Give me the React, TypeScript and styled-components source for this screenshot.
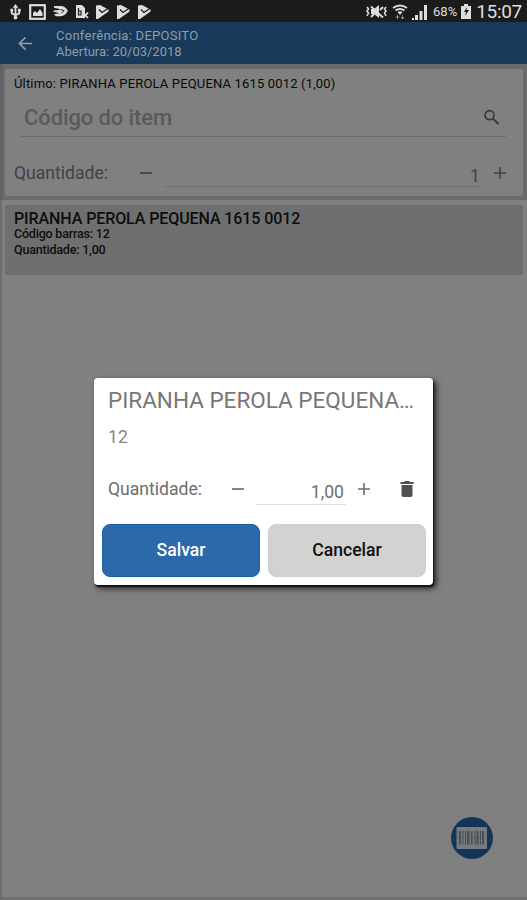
import React from 'react';
import styled, { createGlobalStyle } from 'styled-components';

const GlobalStyle = createGlobalStyle`
  * { box-sizing: border-box; }
  body { margin: 0; background: #7f7f7f; font-family: Roboto, "Liberation Sans", sans-serif; }
  svg { display: block; flex: none; }
`;

const Screen = styled.div`
  position: relative;
  width: 527px;
  height: 900px;
  overflow: hidden;
  display: flex;
  flex-direction: column;
  background: #7f7f7f;
`;

const StatusBar = styled.div`
  height: 22px;
  flex: none;
  display: flex;
  align-items: center;
  justify-content: space-between;
  padding: 1px 5px 0 9px;
  background: #1b1b1b;
  color: #dedede;
`;

const StatusGroup = styled.div<{ $gap: number }>`
  display: flex;
  align-items: center;
  gap: ${p => p.$gap}px;
`;

const Battery = styled.span`
  font-size: 13px;
  line-height: 21px;
  letter-spacing: 0;
  margin-left: 1px;
`;

const Clock = styled.span`
  font-size: 19px;
  line-height: 21px;
  letter-spacing: -0.3px;
  margin-left: 1px;
`;

const Header = styled.header`
  height: 42px;
  flex: none;
  display: flex;
  padding: 6px 0 0 17px;
  gap: 23px;
  background: #183959;
  color: #929da8;
`;

const BackButton = styled.div`
  padding-top: 8px;
`;

const HeaderText = styled.div`
  font-size: 13px;
  line-height: 16px;
`;

const HeaderLine = styled.div<{ $spacing: number }>`
  letter-spacing: ${p => p.$spacing}px;
`;

const CardFrame = styled.section`
  height: 136px;
  flex: none;
  padding: 5px 4px 4px 2px;
  background: #6b6b6b;
  border-left: 3px solid #626262;
`;

const Card = styled.div`
  height: 127px;
  padding: 7px 14px 0 9px;
  background: #808080;
  border-radius: 2px;
`;

const LastItem = styled.div`
  font-size: 13px;
  line-height: 16px;
  letter-spacing: 0.16px;
  color: #080808;
`;

const SearchField = styled.div`
  height: 45px;
  margin: 0 3px 0 7px;
  padding: 13px 6px 0 3px;
  display: flex;
  justify-content: space-between;
  border-bottom: 1px solid #6c6c6c;
`;

const Placeholder = styled.div`
  font-size: 22px;
  font-weight: 500;
  line-height: 26px;
  letter-spacing: -0.1px;
  color: #5a5a5a;
`;

const SearchIcon = styled.div`
  padding-top: 4px;
`;

const QuantityRow = styled.div<{ $modal?: boolean }>`
  display: flex;
  height: ${p => (p.$modal ? 34 : 50)}px;
  padding-top: ${p => (p.$modal ? 6 : 24)}px;
  color: ${p => (p.$modal ? '#6e6e6e' : '#424242')};
`;

const QuantityLabel = styled.div<{ $width: number }>`
  width: ${p => p.$width}px;
  font-size: 17.6px;
  line-height: 25px;
`;

const Step = styled.div<{ $side: 'minus' | 'plus'; $width?: number }>`
  padding-top: 5px;
  width: ${p => p.$width ?? 14}px;
  margin-left: ${p => (p.$side === 'minus' ? 0 : 11)}px;
`;

const QuantityValue = styled.div<{ $width: number; $modal?: boolean }>`
  width: ${p => p.$width}px;
  padding: 3px 2px 0 0;
  text-align: right;
  font-size: 17.6px;
  line-height: 24px;
  height: ${p => (p.$modal ? 28 : 26)}px;
  border-bottom: 1px solid ${p => (p.$modal ? '#dcdcdc' : '#707070')};
`;

const List = styled.main`
  flex: 1;
  padding: 5px 4px 0 3px;
  background: #808080;
  border-left: 2px solid #6c6c6c;
  border-bottom: 3px solid #6f6f6f;
`;

const ListItem = styled.div`
  height: 70px;
  padding: 6px 9px;
  color: #0d0d0d;
  background: #6f6f6f;
`;

const ItemTitle = styled.div`
  font-size: 16px;
  line-height: 15px;
  font-weight: 500;
  letter-spacing: -0.09px;
`;

const ItemLine = styled.div`
  font-size: 12.5px;
  line-height: 16px;
  font-weight: 500;
  letter-spacing: -0.2px;
`;

const ScanButton = styled.div`
  position: absolute;
  left: 451px;
  top: 817px;
  width: 42px;
  height: 42px;
`;

const Overlay = styled.div`
  position: absolute;
  inset: 0;
  display: flex;
  align-items: flex-start;
  padding: 378px 0 0 94px;
`;

const Dialog = styled.div`
  width: 339px;
  height: 207px;
  padding: 8px 8px 0;
  border-radius: 4px;
  background: #fff;
  box-shadow: 1px 2px 1px #151515, 3px 3px 6px rgba(0, 0, 0, 0.8);
`;

const DialogBody = styled.div`
  padding: 0 6px;
  height: 138px;
`;

const DialogTitle = styled.div`
  font-size: 22.5px;
  line-height: 28px;
  height: 29px;
  color: #777;
  white-space: nowrap;
`;

const DialogCode = styled.div`
  margin-top: 10px;
  margin-bottom: 22px;
  font-size: 17.6px;
  line-height: 24px;
  color: #858585;
`;

const TrashIcon = styled.div`
  margin-left: 29px;
  padding-top: 3px;
`;

const Actions = styled.div`
  display: grid;
  grid-template-columns: 158px 158px;
  gap: 8px;
`;

const Button = styled.button<{ $primary?: boolean }>`
  height: 53px;
  padding: 0 0 2px;
  border: 1px solid ${p => (p.$primary ? '#1e60a4' : '#d0d0d0')};
  border-radius: 8px;
  background: ${p => (p.$primary ? '#2c69aa' : '#d2d2d2')};
  color: ${p => (p.$primary ? '#fff' : '#111')};
  font: 500 17.6px/24px Roboto, "Liberation Sans", sans-serif;
`;

const UsbIcon = () => (
  <svg width="13" height="16" viewBox="0 0 14 17" fill="none" stroke="currentColor" strokeWidth="2">
    <path d="M7 3v11M3 7v3l4 2 4-2V6" />
    <path d="M4 4l3-4 3 4zM1.5 5h3v3h-3zM9.5 5h3v3h-3z" fill="currentColor" stroke="none" />
    <circle cx="7" cy="14.5" r="2" fill="currentColor" stroke="none" />
  </svg>
);

const ImageIcon = () => (
  <svg width="17" height="16" viewBox="0 0 17 16">
    <rect x="1.2" y="1.2" width="14.6" height="13.6" fill="none" stroke="currentColor" strokeWidth="2.2" />
    <path d="M4 12V9l2-2 2 2 3-4 2.5 4v3z" fill="currentColor" />
  </svg>
);

const SyncIcon = () => (
  <svg width="16" height="13" viewBox="0 0 17 14" fill="currentColor">
    <path d="M2 1h7c4 0 6 2 8 5-2 4-4 6-8 6H4l-2-2 6-1-7-2 1-1 7-1-2-1-5-1z" />
    <path d="M9 5l4 1-3 3" fill="none" stroke="#1b1b1b" />
  </svg>
);

const FileIcon = () => (
  <svg width="14" height="15" viewBox="0 0 14 15">
    <path d="M1 1h6l3 3v10H1z" fill="currentColor" />
    <path d="M3.500 4v7h2.500V7H3.500" fill="none" stroke="#1b1b1b" strokeWidth="1.2" />
    <path d="M8 8.500l5 5.500M13 8.500L8 14" stroke="currentColor" strokeWidth="1.800" />
  </svg>
);

const FlagIcon = () => (
  <svg width="14" height="14" viewBox="0 0 14 14">
    <path d="M1 .5L5 0l8.500 4.500v2L3 14H1z" fill="currentColor" />
    <path d="M4 4.500l3 3L13.500 3" fill="none" stroke="#1b1b1b" strokeWidth="1.300" />
  </svg>
);

const MuteIcon = () => (
  <svg width="22" height="14" viewBox="0 0 22 14" fill="none" stroke="currentColor">
    <path d="M5 4h3l5-4v13L8 9H5z" fill="currentColor" stroke="none" />
    <path d="M5 1.500l12 11M5 12l3-3M14 5l3-3" strokeWidth="1.900" />
    <path d="M1 2l1.500 2L1 6l1.500 2L1 11M20 2l-1.500 2L20 6l-1.500 2L20 11" strokeWidth="1.600" />
  </svg>
);

const WifiIcon = () => (
  <svg width="16" height="16" viewBox="0 0 16 16" fill="none" stroke="currentColor" strokeWidth="1.900">
    <path d="M1 4q7-5 14 0M3.500 6.500q4.500-3 9 0" />
    <path d="M5.500 8L8 11l2.500-3Q8 6.500 5.500 8z" fill="currentColor" stroke="none" />
    <path d="M5.500 11v4M3.500 13h4M10.500 11v4M9 13l1.500 2 1.500-2" strokeWidth="1" opacity=".55" />
  </svg>
);

const SignalIcon = () => (
  <svg width="16" height="16" viewBox="0 0 16 16" fill="currentColor">
    <path d="M0 14h2v2H0zM3 11h3v5H3zM7.500 7h3v9h-3zM12 1h3v15h-3z" />
  </svg>
);

const BatteryIcon = () => (
  <svg width="10" height="15" viewBox="0 0 10 15">
    <path d="M3 0h4v2h3v13H0V2h3z" fill="currentColor" />
    <path d="M6 3L3 8h2l-1 4 4-6H5.500z" fill="#1b1b1b" />
  </svg>
);

const BackIcon = () => (
  <svg width="16" height="15" viewBox="0 0 17 16" fill="none" stroke="currentColor" strokeWidth="1.700">
    <path d="M16 8H3M9 1.500L2.500 8 9 14.500" />
  </svg>
);

const MagnifierIcon = () => (
  <svg width="17" height="17" viewBox="0 0 17 17" fill="none" stroke="#383838" strokeWidth="1.700">
    <circle cx="6.500" cy="6.200" r="4.500" />
    <path d="M10 9.700l5.500 5.300" strokeWidth="2" />
  </svg>
);

const MinusIcon = () => (
  <svg width="14" height="14" viewBox="0 0 14 14">
    <path d="M1 7h12" stroke="currentColor" strokeWidth="1.700" />
  </svg>
);

const PlusIcon = () => (
  <svg width="14" height="14" viewBox="0 0 14 14">
    <path d="M1 7h12M7 1v12" stroke="currentColor" strokeWidth="1.600" />
  </svg>
);

const BinIcon = () => (
  <svg width="14" height="18" viewBox="0 0 14 18" fill="#505050">
    <path d="M.5 2h3.500l1-1h4l1 1h3.500v2H.500zM1.500 5h11V15q0 2-2 2h-7q-2 0-2-2z" />
  </svg>
);

const bars: [number, number][] = [
  [9, 2], [12.5, 1], [15, 1], [17, 2.5], [21, 1.5], [24.5, 1], [26.5, 2], [30, 1], [32, 2],
];

const ScanIcon = () => (
  <svg width="42" height="42" viewBox="0 0 42 42">
    <circle cx="21" cy="21" r="21" fill="#123557" />
    <rect x="5.500" y="10" width="30.500" height="22" rx="1" fill="#777b80" />
    {bars.map(([x, w]) => (
      <rect key={x} x={x - 1} y="14" width={w} height="13.500" fill="#4b4e53" />
    ))}
    <path d="M6 20.500h29" stroke="#884650" strokeWidth="1" opacity=".8" />
  </svg>
);

export default function App() {
  return (
    <>
      <GlobalStyle />
      <Screen>
        <StatusBar>
          <StatusGroup $gap={6.6}>
            <UsbIcon />
            <ImageIcon />
            <SyncIcon />
            <FileIcon />
            <FlagIcon />
            <FlagIcon />
            <FlagIcon />
          </StatusGroup>
          <StatusGroup $gap={4}>
            <MuteIcon />
            <WifiIcon />
            <SignalIcon />
            <Battery>68%</Battery>
            <BatteryIcon />
            <Clock>15:07</Clock>
          </StatusGroup>
        </StatusBar>
        <Header>
          <BackButton><BackIcon /></BackButton>
          <HeaderText>
            <HeaderLine $spacing={0.27}>Conferência: DEPOSITO</HeaderLine>
            <HeaderLine $spacing={0}>Abertura: 20/03/2018</HeaderLine>
          </HeaderText>
        </Header>
        <CardFrame>
          <Card>
            <LastItem>Último: PIRANHA PEROLA PEQUENA 1615 0012 (1,00)</LastItem>
            <SearchField>
              <Placeholder>Código do item</Placeholder>
              <SearchIcon><MagnifierIcon /></SearchIcon>
            </SearchField>
            <QuantityRow>
              <QuantityLabel $width={125}>Quantidade:</QuantityLabel>
              <Step $side="minus" $width={26}><MinusIcon /></Step>
              <QuantityValue $width={317}>1</QuantityValue>
              <Step $side="plus"><PlusIcon /></Step>
            </QuantityRow>
          </Card>
        </CardFrame>
        <List>
          <ListItem>
            <ItemTitle>PIRANHA PEROLA PEQUENA 1615 0012</ItemTitle>
            <ItemLine>Código barras: 12</ItemLine>
            <ItemLine>Quantidade: 1,00</ItemLine>
          </ListItem>
        </List>
        <ScanButton><ScanIcon /></ScanButton>
        <Overlay>
          <Dialog>
            <DialogBody>
              <DialogTitle>PIRANHA PEROLA PEQUENA…</DialogTitle>
              <DialogCode>12</DialogCode>
              <QuantityRow $modal>
                <QuantityLabel $width={123}>Quantidade:</QuantityLabel>
                <Step $side="minus" $width={25}><MinusIcon /></Step>
                <QuantityValue $modal $width={90}>1,00</QuantityValue>
                <Step $side="plus"><PlusIcon /></Step>
                <TrashIcon><BinIcon /></TrashIcon>
              </QuantityRow>
            </DialogBody>
            <Actions>
              <Button $primary>Salvar</Button>
              <Button>Cancelar</Button>
            </Actions>
          </Dialog>
        </Overlay>
      </Screen>
    </>
  );
}
